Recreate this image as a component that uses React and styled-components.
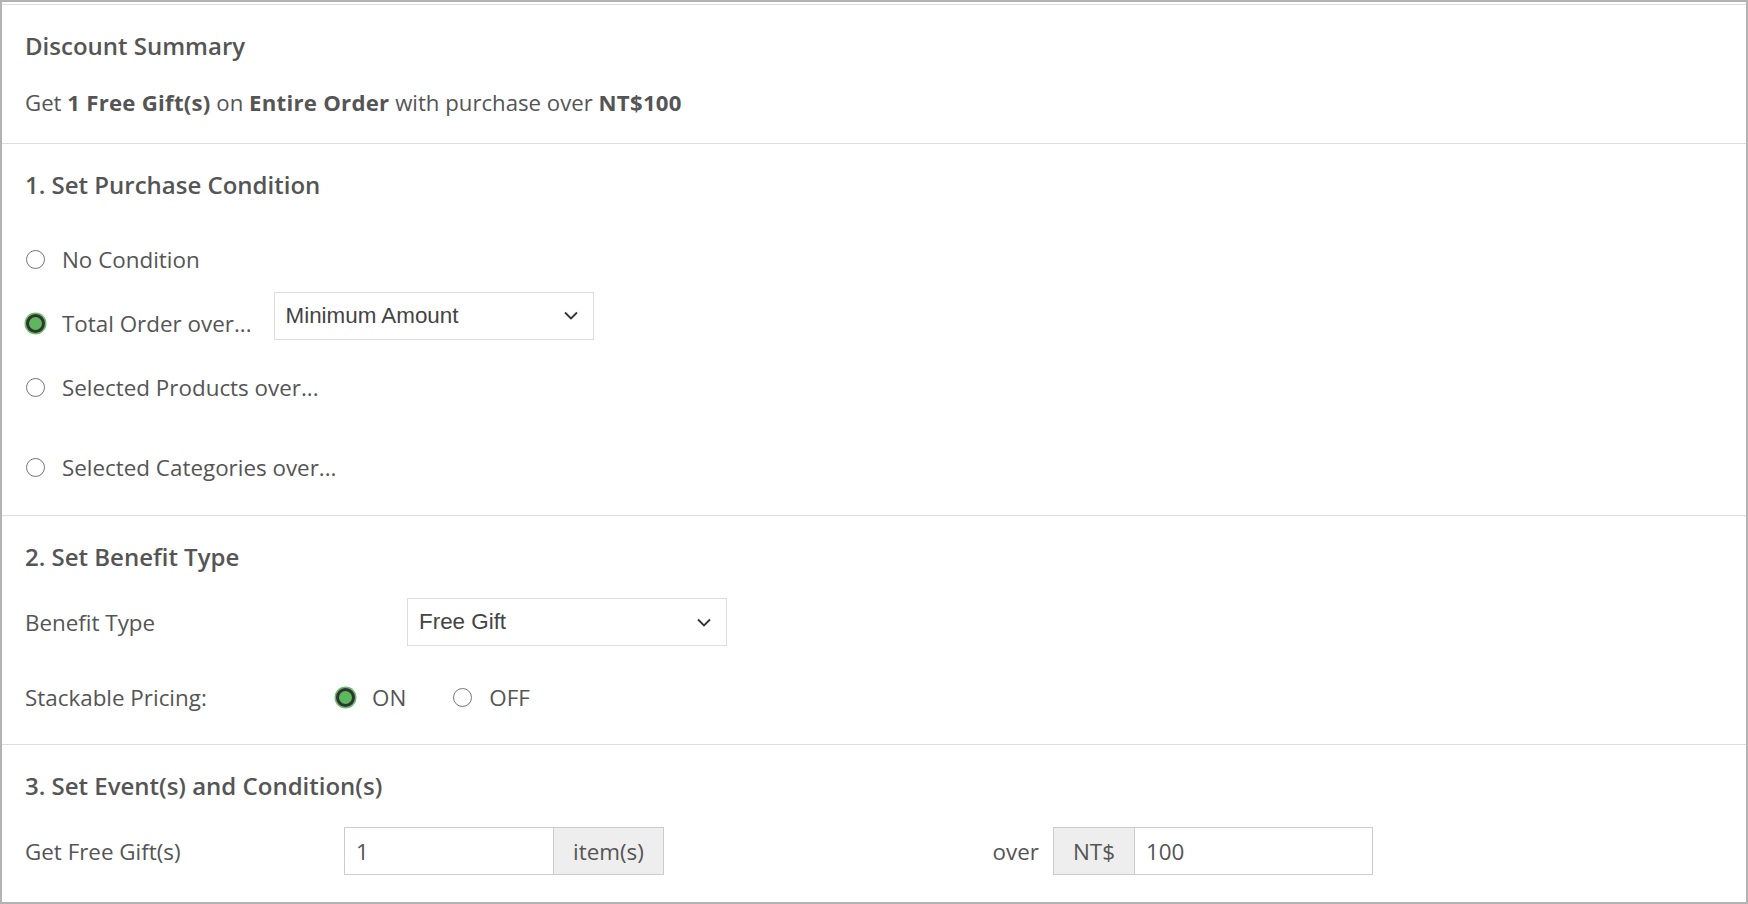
import styled, { createGlobalStyle } from "styled-components";

const GlobalStyle = createGlobalStyle`
  html, body {
    margin: 0;
    padding: 0;
    background: #ffffff;
  }
  body {
    font-family: "Open Sans", "Noto Sans", Arial, sans-serif;
    color: #555555;
  }
  * {
    box-sizing: border-box;
  }
`;

const Frame = styled.div`
  width: 1748px;
  height: 904px;
  border: 2px solid #b3b3b3;
  padding-top: 2px;
  background: #ffffff;
  overflow: hidden;
`;

const Section = styled.section`
  border-top: 1px solid #dddddd;
  padding: 24px 23px ${(p) => p.$bottom || 24}px;
`;

const Heading = styled.h3`
  margin: 0 0 ${(p) => p.$gap || 24}px;
  font-size: 24px;
  font-weight: 600;
  line-height: 34px;
  color: #555555;
`;

const Summary = styled.p`
  margin: 0;
  font-size: 22.2px;
  line-height: 32px;
  b {
    font-weight: 700;
    letter-spacing: 0.25px;
  }
`;

const Row = styled.div`
  display: flex;
  align-items: center;
  height: 48px;
  margin-top: ${(p) => p.$top || 0}px;
  font-size: 22.4px;
`;

const RadioOption = styled.label`
  display: inline-flex;
  align-items: center;
  gap: 17px;
  margin-right: ${(p) => p.$after || 22}px;
  font-size: 22.4px;
  cursor: pointer;
`;

const RadioDot = styled.span`
  display: inline-block;
  width: 19px;
  height: 19px;
  margin-left: 1px;
  border-radius: 50%;
  flex-shrink: 0;
  border: ${(p) => (p.$on ? "3px solid #333333" : "1px solid #767676")};
  background: ${(p) => (p.$on ? "#5cb85c" : "#ffffff")};
  box-shadow: ${(p) => (p.$on ? "0 0 0 1.5px #6abf6a" : "none")};
`;

const FieldLabel = styled.span`
  width: ${(p) => p.$w}px;
  flex-shrink: 0;
  text-align: ${(p) => (p.$right ? "right" : "left")};
  padding-right: ${(p) => (p.$right ? 14 : 0)}px;
`;

const SelectBox = styled.div`
  display: flex;
  align-items: center;
  justify-content: space-between;
  width: 320px;
  height: 48px;
  margin-bottom: ${(p) => p.$lift || 0}px;
  padding: 0 15px 0 11px;
  border: 1px solid #dddddd;
  background: #ffffff;
  font-family: "Liberation Sans", Arial, sans-serif;
  font-size: 22.4px;
  color: #444444;
  svg {
    flex-shrink: 0;
  }
`;

const InputGroup = styled.div`
  display: flex;
  height: 48px;
`;

const TextInput = styled.div`
  display: flex;
  align-items: center;
  width: ${(p) => p.$w}px;
  padding-left: 11px;
  border: 1px solid #cccccc;
  ${(p) => (p.$joinLeft ? "border-left: none;" : "")}
  background: #ffffff;
  font-size: 22.4px;
  color: #555555;
`;

const Addon = styled.div`
  display: flex;
  align-items: center;
  justify-content: center;
  width: ${(p) => p.$w}px;
  border: 1px solid #cccccc;
  ${(p) => (p.$joinLeft ? "border-left: none;" : "")}
  background: #eeeeee;
  font-size: 22.4px;
  color: #555555;
`;

const Half = styled.div`
  display: flex;
  align-items: center;
  flex: 1;
`;

function Chevron() {
  return (
    <svg width="14" height="9" viewBox="0 0 14 9">
      <polyline points="1,1.5 7,7.5 13,1.5" fill="none" stroke="#333" strokeWidth="1.8" />
    </svg>
  );
}

function Radio({ on, children, after }) {
  return (
    <RadioOption $after={after}>
      <RadioDot $on={on} />
      {children}
    </RadioOption>
  );
}

export default function App() {
  return (
    <>
      <GlobalStyle />
      <Frame>
        <Section>
          <Heading>Discount Summary</Heading>
          <Summary>
            Get <b>1 Free Gift(s)</b> on <b>Entire Order</b> with purchase over <b>NT$100</b>
          </Summary>
        </Section>

        <Section>
          <Heading $gap={33}>1. Set Purchase Condition</Heading>
          <Row>
            <Radio>No Condition</Radio>
          </Row>
          <Row $top={16}>
            <Radio on>Total Order over...</Radio>
            <SelectBox $lift={15}>
              Minimum Amount
              <Chevron />
            </SelectBox>
          </Row>
          <Row $top={16}>
            <Radio>Selected Products over...</Radio>
          </Row>
          <Row $top={32}>
            <Radio>Selected Categories over...</Radio>
          </Row>
        </Section>

        <Section $bottom={23}>
          <Heading>2. Set Benefit Type</Heading>
          <Row>
            <FieldLabel $w={382}>Benefit Type</FieldLabel>
            <SelectBox>
              Free Gift
              <Chevron />
            </SelectBox>
          </Row>
          <Row $top={27}>
            <FieldLabel $w={310}>Stackable Pricing:</FieldLabel>
            <Radio on after={46}>ON</Radio>
            <Radio>OFF</Radio>
          </Row>
        </Section>

        <Section $bottom={27}>
          <Heading>3. Set Event(s) and Condition(s)</Heading>
          <Row>
            <Half>
              <FieldLabel $w={319}>Get Free Gift(s)</FieldLabel>
              <InputGroup>
                <TextInput $w={210}>1</TextInput>
                <Addon $w={110} $joinLeft>item(s)</Addon>
              </InputGroup>
            </Half>
            <Half>
              <FieldLabel $w={179} $right>over</FieldLabel>
              <InputGroup>
                <Addon $w={82}>NT$</Addon>
                <TextInput $w={238} $joinLeft>100</TextInput>
              </InputGroup>
            </Half>
          </Row>
        </Section>
      </Frame>
    </>
  );
}
